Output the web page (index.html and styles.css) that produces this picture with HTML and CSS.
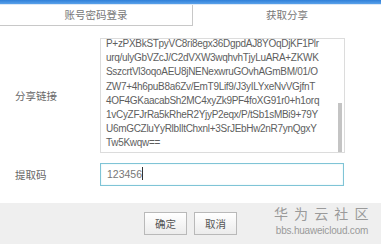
FILE: index.html
```html
<!DOCTYPE html>
<html lang="zh-CN">
<head>
  <meta charset="UTF-8">
  <title>获取分享</title>
  <link rel="stylesheet" href="styles.css">
</head>
<body>
  <div class="titlebar"></div>
  <div class="tabs">
    <div class="tab">账号密码登录</div>
    <div class="tab active">获取分享</div>
  </div>

  <div class="form">
    <div class="row">
      <label class="label">分享链接</label>
      <div class="link-box">
        <div class="link-text">
          <div>P+zPXBkSTpyVC8ri8egx36DgpdAJ8YOqDjKF1Plr</div>
          <div>urq/ulyGbVZcJ/C2dVXW3wqhvhTjyLuARA+ZKWK</div>
          <div>SszcrtVl3oqoAEU8jNENexwruGOvhAGmBM/01/O</div>
          <div>ZW7+4h6puB8a6Zv/EmT9Lif9/J3yILYxeNvVGjfnT</div>
          <div>4OF4GKaacabSh2MC4xyZk9PF4foXG91r0+h1orq</div>
          <div>1vCyZFJrRa5kRheR2YjyP2eqx/P/tSb1sMBi9+79Y</div>
          <div>U6mGCZluYyRlbIltChxnl+3SrJEbHw2nR7ynQgxY</div>
          <div>Tw5Kwqw==</div>
        </div>
        <div class="scroll-thumb"></div>
      </div>
    </div>
    <div class="row code-row">
      <label class="label">提取码</label>
      <div class="code-input">123456<span class="caret"></span></div>
    </div>
  </div>

  <div class="footer">
    <button class="btn">确定</button>
    <button class="btn">取消</button>
    <div class="watermark">
      <div class="wm-cn">华 为 云 社 区</div>
      <div class="wm-url">bbs.huaweicloud.com</div>
    </div>
  </div>
</body>
</html>
```

FILE: styles.css
```css
body {
  margin: 0;
  width: 381px;
  height: 244px;
  overflow: hidden;
  background: white;
  font-family: 'Liberation Sans', 'Noto Sans CJK SC', sans-serif;
  color: #555;
  position: relative;
}
.titlebar {
  height: 4px;
  background: linear-gradient(to bottom, #2f7fd8, #5aa2ea);
  border-bottom: 1px solid #dce8f6;
}
.tabs {
  display: flex;
  height: 21px;
}
.tab {
  flex: 1;
  text-align: center;
  font-family: 'Noto Sans CJK SC', sans-serif;
  font-size: 10.5px;
  line-height: 20px;
  color: #777;
  border-bottom: 1px solid #c8c8c8;
}
.tab:first-child {
  flex: 0 0 192px;
  border-right: 1px solid #c8c8c8;
}
.tab.active {
  border-bottom: none;
}
.form {
  padding: 12px 0 0 15px;
}
.row {
  display: flex;
  align-items: center;
}
.label {
  width: 85px;
  font-family: 'Noto Sans CJK SC', sans-serif;
  font-size: 10.5px;
  color: #666;
}
.link-box {
  position: relative;
  width: 243px;
  height: 113px;
  border: 1px solid #dcdcdc;
  overflow: hidden;
}
.link-text {
  padding: 0 0 0 5px;
  font-size: 10px;
  letter-spacing: -0.3px;
  line-height: 14.2px;
  color: #5e5e5e;
  white-space: nowrap;
  margin-top: -2px;
}
.scroll-thumb {
  position: absolute;
  right: 2px;
  bottom: 0;
  width: 4px;
  height: 49px;
  background: #c4c4c4;
}
.code-row {
  margin-top: 10px;
}
.code-input {
  width: 236px;
  height: 21px;
  border: 1px solid #7fc4d6;
  box-shadow: inset 0 0 2px #d6eef4;
  padding-left: 6px;
  font-size: 10.5px;
  line-height: 21px;
  color: #777;
}
.caret {
  display: inline-block;
  width: 1px;
  height: 13px;
  background: #333;
  vertical-align: -2px;
}
.footer {
  position: absolute;
  left: 0;
  right: 0;
  bottom: 0;
  height: 41px;
  background: #efefef;
  display: flex;
  justify-content: center;
  align-items: center;
  gap: 7px;
}
.btn {
  width: 43px;
  height: 23px;
  padding: 0;
  border: 1px solid #b9b9b9;
  background: linear-gradient(to bottom, #ffffff, #ececec);
  font-family: 'Noto Sans CJK SC', sans-serif;
  font-size: 10.5px;
  color: #555;
}
.watermark {
  position: absolute;
  right: 11px;
  top: 2px;
  text-align: center;
  color: #9a9a9a;
}
.wm-cn {
  font-family: 'Noto Sans CJK SC', sans-serif;
  font-size: 14px;
  line-height: 17px;
  letter-spacing: 1.5px;
}
.wm-url {
  margin-top: 3px;
  font-size: 10px;
  line-height: 12px;
  letter-spacing: -0.2px;
}
```
